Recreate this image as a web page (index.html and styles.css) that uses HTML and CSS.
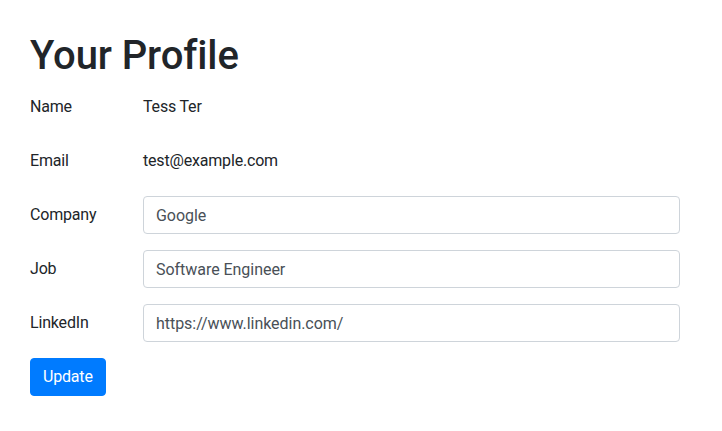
FILE: index.html
```html
<!DOCTYPE html>
<html lang="en">
<head>
<meta charset="utf-8">
<title>Your Profile</title>
<link rel="stylesheet" href="styles.css">
</head>
<body>
<main class="page">
  <h1 class="title">Your Profile</h1>
  <form class="profile-form">
    <div class="form-row">
      <label class="form-label">Name</label>
      <div class="plain-value">Tess Ter</div>
    </div>
    <div class="form-row">
      <label class="form-label">Email</label>
      <div class="plain-value">test@example.com</div>
    </div>
    <div class="form-row">
      <label class="form-label" for="company">Company</label>
      <input class="form-input" id="company" type="text" value="Google">
    </div>
    <div class="form-row">
      <label class="form-label" for="job">Job</label>
      <input class="form-input" id="job" type="text" value="Software Engineer">
    </div>
    <div class="form-row">
      <label class="form-label" for="linkedin">LinkedIn</label>
      <input class="form-input" id="linkedin" type="text" value="https://www.linkedin.com/">
    </div>
    <div class="actions">
      <button class="btn-primary" type="button">Update</button>
    </div>
  </form>
</main>
</body>
</html>
```
FILE: styles.css
```css
* { box-sizing: border-box; }
html, body {
  margin: 0;
  padding: 0;
  background: #fff;
}
body {
  font-family: Roboto, "Liberation Sans", Arial, sans-serif;
  font-size: 16px;
  line-height: 1.5;
  color: #212529;
}
.page {
  padding: 32px 42px 0 30px;
}
.title {
  margin: 0 0 8px 0;
  font-size: 40px;
  font-weight: 500;
  line-height: 1.2;
  letter-spacing: -0.1px;
}
.profile-form {
  display: flex;
  flex-direction: column;
  letter-spacing: -0.18px;
}
.form-row {
  display: grid;
  grid-template-columns: 113px 1fr;
  margin-bottom: 16px;
}
.form-label {
  padding: 7px 0;
  line-height: 24px;
}
.plain-value {
  padding: 7px 0;
  line-height: 24px;
}
.form-input {
  display: block;
  width: 100%;
  height: 38px;
  padding: 6px 12px;
  font-family: inherit;
  font-size: 16px;
  line-height: 24px;
  letter-spacing: -0.04px;
  color: #495057;
  background: #fff;
  border: 1px solid #ced4da;
  border-radius: 4px;
  outline: none;
}
.actions {
  display: flex;
}
.btn-primary {
  height: 38px;
  padding: 6px 12px;
  font-family: inherit;
  font-size: 16px;
  line-height: 24px;
  letter-spacing: inherit;
  color: #fff;
  background: #007bff;
  border: 1px solid #007bff;
  border-radius: 4px;
}
```
